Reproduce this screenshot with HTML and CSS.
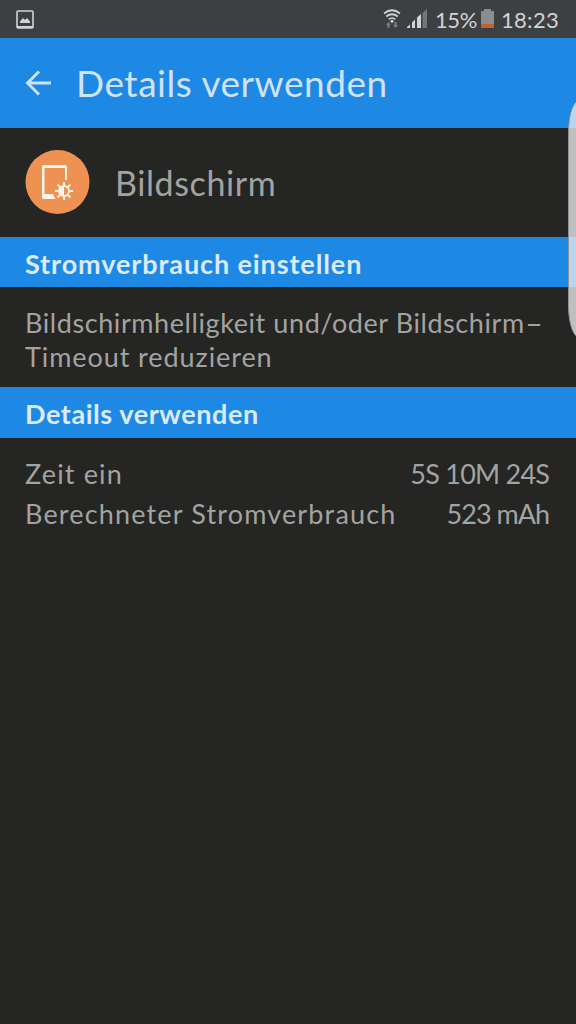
FILE: index.html
```html
<!DOCTYPE html>
<html lang="de">
<head>
<meta charset="utf-8">
<title>Details verwenden</title>
<link rel="stylesheet" href="styles.css">
</head>
<body>
<div class="screen">
  <header class="status">
    <svg class="picture" width="18" height="19" viewBox="0 0 18 19"><rect x="1" y="1" width="16" height="17" rx="1" fill="none" stroke="#d2d3d4" stroke-width="1.6"/><path d="M1 16h16v2H1zM4 13v-1.500l3-3.500 2 2 2-2 3 3.500V13z" fill="#d2d3d4"/></svg>
    <div class="indicators">
      <svg class="wifi" width="18" height="20" viewBox="0 0 18 20"><g fill="none" stroke="#d2d3d4" stroke-width="1.700"><path d="M1 4.500q8-6.500 16 0M3.300 7.500q5.700-4.500 11.400 0M5.700 10.300q3.300-2.600 6.600 0"/></g><circle cx="9" cy="12.300" r="1.500" fill="#d2d3d4"/><path d="M5.500 13l2.500 3H6.500v3h-2v-3H3zM12.500 19l-2.500-3h1.500v-3h2v3H15z" fill="#7c7e80"/></svg>
      <svg class="signal" width="20" height="20" viewBox="0 0 20 20"><path d="M0 19v-1l3-2.500V19zM5 19v-5.500l3-3V19zM10 19V8.500L14 5v14z" fill="#d2d3d4"/><path d="M15.500 19V4L20 0v19z" fill="#737577"/></svg>
      <span class="percent">15%</span>
      <svg class="battery" width="14" height="20" viewBox="0 0 14 20"><path d="M0 2h3V0h7v2h3v13H0z" fill="#8b8c8d"/><path d="M0 15h13v4H0z" fill="#c45f33"/></svg>
      <span class="clock">18:23</span>
    </div>
  </header>
  <div class="appbar">
    <svg width="28" height="26" viewBox="0 0 28 26"><path d="M26 13H3M14 1.500L2.500 13 14 24.500" fill="none" stroke="#cfe2f5" stroke-width="2.900"/></svg>
    <h1 class="title">Details verwenden</h1>
  </div>
  <section class="app">
    <svg width="65" height="64" viewBox="0 0 65 64"><circle cx="32.500" cy="32" r="32" fill="#ee9254"/><path d="M30.500 49H19a2 2 0 0 1-2-2V17a2 2 0 0 1 2-2h21a2 2 0 0 1 2 2v13h-2V18H19.500v26H28z" fill="#fff4e8"/><g stroke="#fff4e8" stroke-width="2"><path d="M39 32v4M39 46v4M30 41h4M44 41h4M32.600 34.600l3 3M42.400 44.400l3 3M45.400 34.600l-3 3M35.600 44.400l-3 3"/></g><circle cx="39" cy="41" r="5" fill="#ee9254" stroke="#fff4e8" stroke-width="1.800"/><path d="M39 36a5 5 0 0 0 0 10z" fill="#fff4e8"/></svg>
    <span class="name">Bildschirm</span>
  </section>
  <h2 class="section first"><span class="s1">Stromverbrauch einstellen</span></h2>
  <p class="advice"><span class="a1">Bildschirmhelligkeit und/oder Bildschirm<span class="hyphen">-</span></span><br><span class="a2">Timeout reduzieren</span></p>
  <h2 class="section second"><span class="s2">Details verwenden</span></h2>
  <dl class="stats">
    <div class="row"><dt class="r1">Zeit ein</dt><dd class="v1">5S 10M 24S</dd></div>
    <div class="row"><dt class="r2">Berechneter Stromverbrauch</dt><dd class="v2">523 mAh</dd></div>
  </dl>
  <div class="edge"></div>
</div>
</body>
</html>
```
FILE: styles.css
```css
* { box-sizing: border-box; margin: 0; padding: 0; }
body { background: #252523; font-family: Lato, sans-serif; color: #a3a3a1; }
.screen { position: relative; width: 576px; height: 1024px; overflow: hidden; }
svg { display: block; flex: none; }
span, h1, dt, dd { white-space: nowrap; }
.status { height: 38px; background: #3d3f41; display: flex; justify-content: space-between; align-items: center; padding: 0 17px 0 16px; color: #d2d3d4; font-size: 22px; }
.indicators { display: flex; align-items: center; }
.signal { margin: 0 8px 0 6px; }
.percent { width: 46px; letter-spacing: -.4px; }
.battery { margin-right: 6px; }
.clock { width: 58px; letter-spacing: .3px; }
.appbar { height: 90px; background: #1e88e5; display: flex; align-items: center; padding-left: 25px; gap: 23px; color: #d0e2f4; }
.title { font-size: 37px; font-weight: 400; line-height: 92px; letter-spacing: .53px; }
.app { height: 109px; display: flex; align-items: center; padding: 0 0 1px 25px; gap: 25px; }
.name { font-size: 34px; line-height: 44px; padding-top: 2px; letter-spacing: .6px; }
.section { background: #1e88e5; color: #dcebf9; padding-left: 25px; font-size: 27px; font-weight: 700; }
.first { height: 50px; line-height: 54px; }
.second { height: 51px; line-height: 54px; }
.advice { height: 100px; padding: 19px 0 0 25px; font-size: 27px; line-height: 34px; }
.s1 { letter-spacing: .9px; }
.s2 { letter-spacing: .57px; }
.a1 { letter-spacing: .58px; }
.a2 { letter-spacing: .92px; }
.hyphen { display: inline-block; transform: scaleX(1.8); transform-origin: left; }
.stats { padding: 16px 26px 0 25px; font-size: 27px; }
.row { display: flex; justify-content: space-between; line-height: 40px; }
.r1 { letter-spacing: 1.15px; }
.r2 { letter-spacing: 1.16px; }
.v1 { letter-spacing: -.75px; margin-right: .75px; }
.v2 { letter-spacing: -1px; margin-right: 1px; }
.edge { position: absolute; left: 568px; top: 100px; width: 24px; height: 238px; border-radius: 12px / 32px; background: rgba(235, 235, 237, .78); border-left: 1px solid #8b9298; }
```
